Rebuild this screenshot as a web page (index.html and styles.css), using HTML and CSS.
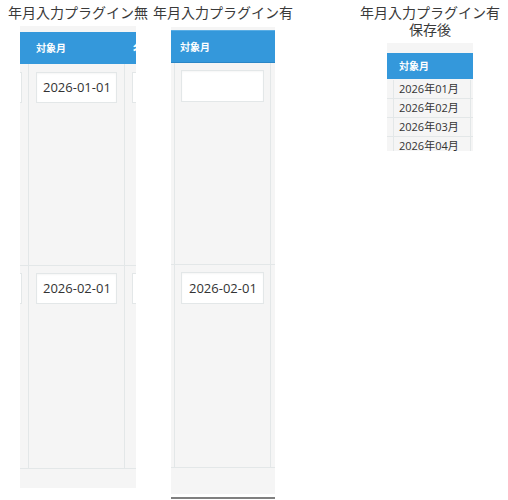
FILE: index.html
```html
<!DOCTYPE html>
<html lang="ja">
<head>
<meta charset="utf-8">
<link rel="stylesheet" href="styles.css">
</head>
<body>
<div class="page">
  <section class="col col1">
    <h2 class="title">年月入力プラグイン無</h2>
    <div class="sub sub1">
      <div class="pad"></div>
      <div class="thead">
        <div></div>
        <div class="th">対象月</div>
        <div class="th">名</div>
      </div>
      <div class="tr tr1">
        <div><div class="stub-l"></div></div>
        <div class="td"><div class="input">2026-01-01</div></div>
        <div><div class="stub-r"></div></div>
      </div>
      <div class="tr tr2">
        <div><div class="stub-l"></div></div>
        <div class="td"><div class="input">2026-02-01</div></div>
        <div><div class="stub-r"></div></div>
      </div>
      <div class="foot"></div>
    </div>
  </section>

  <section class="col col2">
    <h2 class="title">年月入力プラグイン有</h2>
    <div class="sub sub2">
      <div class="pad"></div>
      <div class="thead">
        <div></div>
        <div class="th">対象月</div>
        <div></div>
      </div>
      <div class="tr tr1">
        <div></div>
        <div class="td"><div class="input"></div></div>
        <div></div>
      </div>
      <div class="tr tr2">
        <div></div>
        <div class="td"><div class="input">2026-02-01</div></div>
        <div></div>
      </div>
      <div class="foot"></div>
    </div>
    <div class="scrollbar"></div>
  </section>

  <section class="col col3">
    <h2 class="title title3">年月入力プラグイン有<br>保存後</h2>
    <div class="sub sub3">
      <div class="pad"></div>
      <div class="thead">
        <div></div>
        <div class="th">対象月</div>
        <div></div>
      </div>
      <div class="gap"></div>
      <div class="tr"><div></div><div class="td">2026年01月</div><div></div></div>
      <div class="tr"><div></div><div class="td">2026年02月</div><div></div></div>
      <div class="tr"><div></div><div class="td">2026年03月</div><div></div></div>
      <div class="tr"><div></div><div class="td">2026年04月</div><div></div></div>
    </div>
  </section>
</div>
</body>
</html>
```

FILE: styles.css
```css
* { box-sizing: border-box; }
html, body { margin: 0; padding: 0; background: #fff; }
body { font-family: "Noto Sans CJK JP", "Open Sans", sans-serif; color: #333; }

.page { display: flex; align-items: flex-start; padding-top: 4px; }
.col { display: flex; flex-direction: column; align-items: center; }
.col1 { margin-left: 8px; width: 140px; }
.col2 { margin-left: 7px; width: 136px; }
.col3 { margin-left: 69px; width: 140px; }

.title {
  margin: 0;
  font-size: 14px;
  line-height: 17px;
  font-weight: normal;
  text-align: center;
  white-space: nowrap;
  color: #3a3a3a;
}
.title3 { line-height: 17px; }

.sub { display: flex; flex-direction: column; background: #f5f5f5; overflow: hidden; }
.thead, .tr { display: grid; grid-template-columns: var(--cols); }
.thead { background: #3498db; }
.th {
  color: #fff;
  font-family: "Noto Sans CJK JP", sans-serif;
  font-weight: bold;
  font-size: 10px;
  white-space: nowrap;
  overflow: hidden;
}
.tr { border-bottom: 1px solid #e3e7e8; }
.td { border-left: 1px solid #e3e7e8; border-right: 1px solid #e3e7e8; }

.input {
  background: #fff;
  border: 1px solid #e3e7e8;
  box-shadow: inset 0 1px 2px rgba(0,0,0,0.04);
  height: 31px;
  font-family: "Open Sans", sans-serif;
  font-size: 13px;
  line-height: 29px;
  color: #333;
  white-space: nowrap;
}

/* panel 1 */
.sub1 { --cols: 8px 97px 11px; width: 116px; margin-top: 5px; }
.sub1 .pad { height: 6px; }
.sub1 .thead { height: 32px; }
.sub1 .th { line-height: 32px; padding-left: 8px; }
.sub1 .tr1 { height: 202px; }
.sub1 .tr2 { height: 203px; }
.sub1 .td { padding: 8px 7px 0 7px; }
.sub1 .input { padding-left: 6px; }
.sub1 .tr2 .td { padding-top: 7px; }
.sub1 .foot { height: 19px; }
.stub-l {
  margin-top: 8px; width: 2px; height: 31px;
  background: #fff; border: 1px solid #e3e7e8; border-left: none;
}
.tr2 .stub-l, .tr2 .stub-r { margin-top: 7px; }
.stub-r {
  margin-top: 8px; margin-left: 7px; height: 31px;
  background: #fff; border: 1px solid #e3e7e8; border-right: none;
}

/* panel 2 */
.sub2 { --cols: 3px 97px 4px; width: 104px; margin-top: 6px; }
.sub2 .pad { height: 3px; }
.sub2 .thead { height: 33px; border-top: 1px solid #5aaee5; border-bottom: 1px solid #2a86c6; }
.sub2 .th { line-height: 31px; padding-left: 6px; }
.sub2 .tr1 { height: 202px; }
.sub2 .tr2 { height: 203px; }
.sub2 .td { padding: 7px 6px 0 6px; }
.sub2 .input { height: 32px; line-height: 30px; padding-left: 7px; }
.sub2 .foot { height: 26px; }
.scrollbar { width: 104px; height: 2px; margin-top: 3px; background: #808080; }

/* panel 3 */
.sub3 { --cols: 6px 78px 2px; width: 86px; height: 108px; margin-top: 5px; }
.sub3 .pad { height: 10px; flex: none; }
.sub3 .thead { height: 26px; flex: none; }
.sub3 .th { line-height: 26px; padding-left: 6px; }
.sub3 .gap { height: 1px; flex: none; }
.sub3 .tr { height: 19px; flex: none; }
.sub3 .td {
  font-family: "Open Sans", "Noto Sans CJK JP", sans-serif;
  font-size: 11px;
  line-height: 17px;
  padding-left: 5px;
  color: #333;
  white-space: nowrap;
}
```
